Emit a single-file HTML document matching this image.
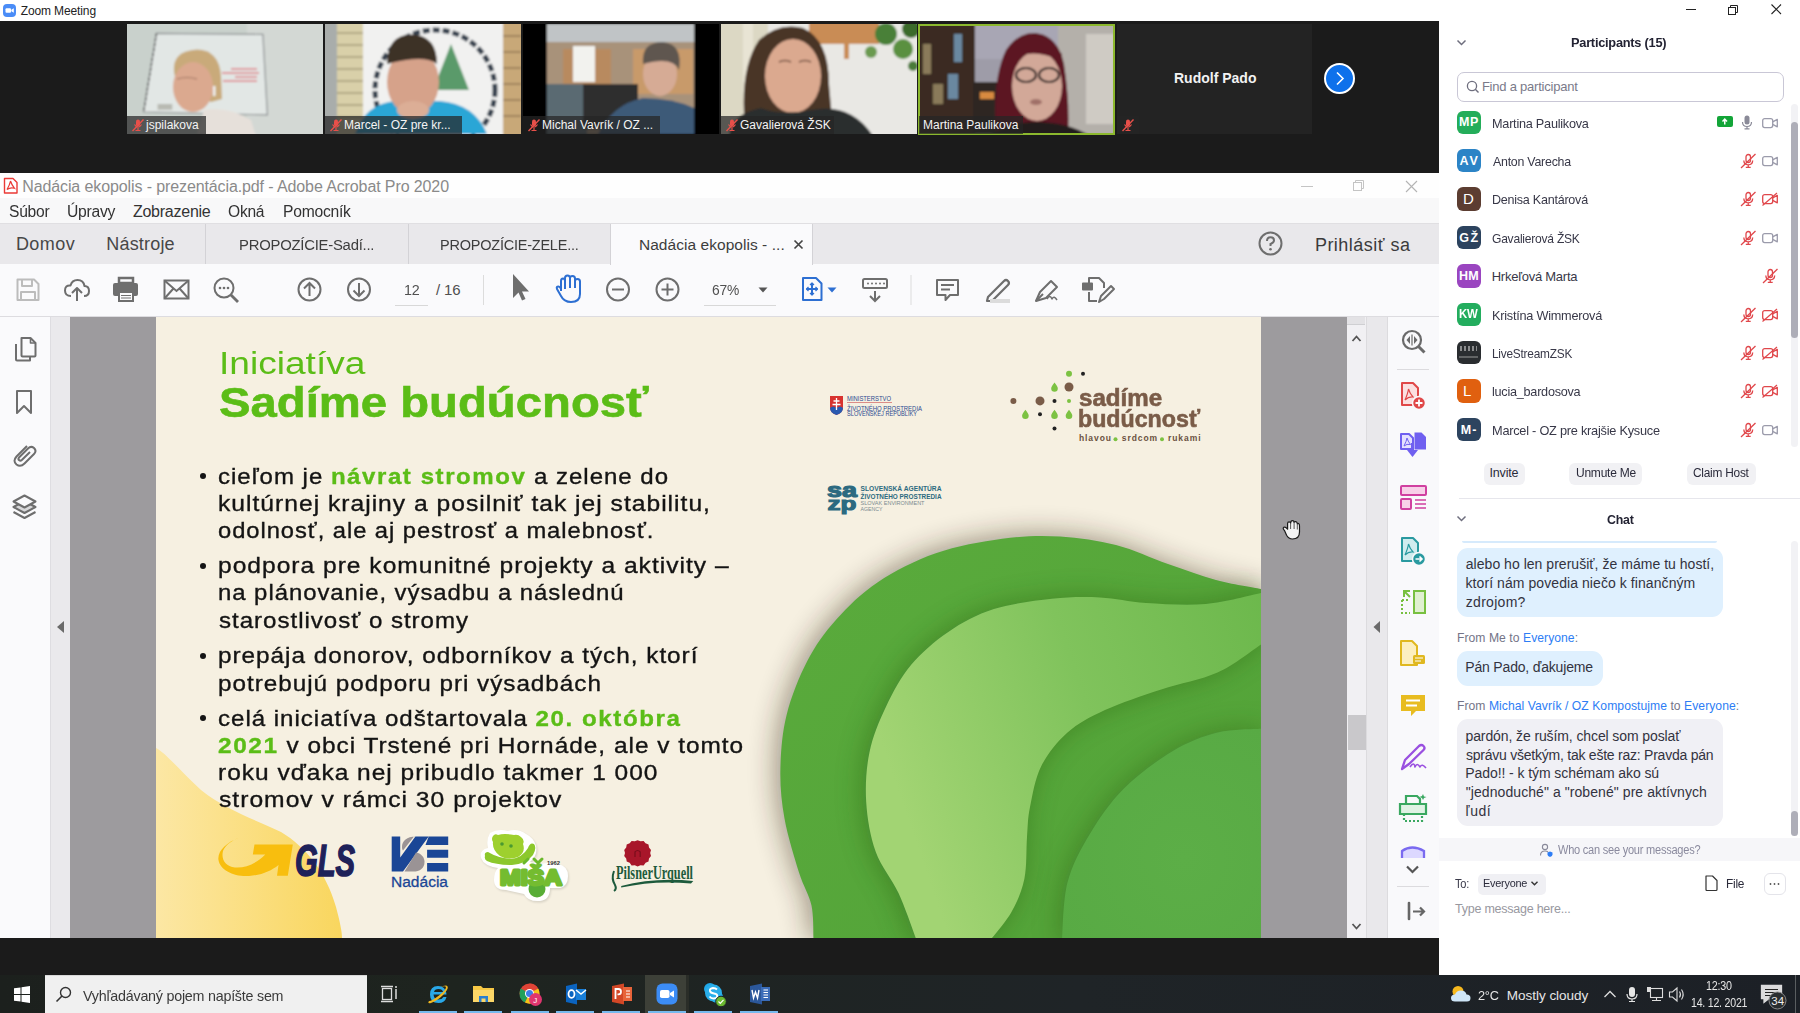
<!DOCTYPE html>
<html><head><meta charset="utf-8">
<style>
*{margin:0;padding:0;box-sizing:border-box}
html,body{width:1800px;height:1013px;overflow:hidden;background:#fff;font-family:"Liberation Sans",sans-serif}
.a{position:absolute}
.t{position:absolute;white-space:nowrap;line-height:1}
svg{overflow:visible}
</style></head><body>

<div class="a" style="left:0;top:0;width:1800px;height:21px;background:#fff"></div>
<svg class="a" style="left:3px;top:4px" width="14" height="14"><rect x="0" y="0" width="13" height="13" rx="4" fill="#4a8cf7"/><rect x="2.5" y="4.2" width="5.5" height="4.6" rx="1" fill="#fff"/><path d="M8.3 5.8 L10.8 4.3 V8.7 L8.3 7.2Z" fill="#fff"/></svg>
<div class="t" style="left:20.7px;top:4.6px;font-size:12px;color:#222;letter-spacing:-0.118px">Zoom Meeting</div>

<div class="a" style="left:0;top:21px;width:1439px;height:152px;background:#1b1b1b"></div>
<svg class="a" style="left:127px;top:24px;" width="196" height="110" viewBox="0 0 196 110"><defs><filter id="bl127" x="-10%" y="-10%" width="120%" height="120%"><feGaussianBlur stdDeviation="1.3"/></filter><clipPath id="cp127"><rect width="196" height="110"/></clipPath></defs><g clip-path="url(#cp127)"><g filter="url(#bl127)"><rect x="-5" y="-5" width="210" height="120" fill="#c9d1cc"/><rect x="120" y="-5" width="90" height="120" fill="#d3d8d4"/>
<path d="M29.5 9.3 L135.9 10.4 L140.4 90.9 L16.6 88 Z" fill="#e2e7e5" stroke="#8a8e90" stroke-width="1.2"/>
<path d="M29.5 9.3 L16.6 88" stroke="#555" stroke-width="1.5" stroke-dasharray="3 2"/>
<rect x="30.6" y="80" width="14.7" height="5.8" fill="#b8bab2"/>
<g stroke="#e07a80" stroke-width="1.3"><path d="M104 45 H130 M95 49 H132 M108 53 H130 M96 57 H130"/></g>
<path d="M47 48 Q45 27 70 25.6 Q92 26 94 52 L95 75 L84 78 L50 62Z" fill="#c9aa7a"/>
<ellipse cx="66" cy="63" rx="20" ry="25" fill="#dba98f"/>
<path d="M50 55 Q60 52 70 55" stroke="#9a7060" stroke-width="1.2" fill="none"/>
<path d="M70 110 L77 86 Q100 82 124 96 L130 115Z" fill="#e6e0da"/>
<rect x="86" y="62" width="2.5" height="10" fill="#f0f0f0"/></g></g></svg>
<svg class="a" style="left:325px;top:24px;" width="196" height="110" viewBox="0 0 196 110"><defs><filter id="bl325" x="-10%" y="-10%" width="120%" height="120%"><feGaussianBlur stdDeviation="1.3"/></filter><clipPath id="cp325"><rect width="196" height="110"/></clipPath></defs><g clip-path="url(#cp325)"><g filter="url(#bl325)"><rect x="-5" y="-5" width="210" height="120" fill="#f1f1f0"/>
<rect x="-5" y="-5" width="18" height="120" fill="#a9adab"/>
<rect x="12" y="-5" width="26" height="120" fill="#d9d0a9"/>
<g stroke="#8a7e62" stroke-width="1.2"><path d="M12 9 H38 M12 21 H38 M12 33 H38 M12 45 H38 M12 57 H38 M12 69 H38 M12 81 H38 M12 93 H38"/></g>
<rect x="178" y="-5" width="25" height="120" fill="#c8a878"/>
<g stroke="#7a6040" stroke-width="1"><path d="M178 12 H196 M178 28 H196 M178 44 H196 M178 60 H196 M178 76 H196 M178 92 H196"/></g>
<circle cx="110" cy="66" r="60" fill="none" stroke="#34404e" stroke-width="5" stroke-dasharray="7 3"/>
<path d="M126 20 L144 66 H108 Z" fill="#5a9a6a"/>
<path d="M30 110 Q40 80 70 77 H115 Q150 80 162 110Z" fill="#2aa6d6"/>
<ellipse cx="88" cy="58" rx="26" ry="33" fill="#d6a28a"/>
<path d="M62 40 Q62 10 88 10.4 Q112 12 112 40 Q100 30 62 40Z" fill="#3d3028"/>
<ellipse cx="88" cy="86" rx="16" ry="9" fill="#dcae96"/></g></g></svg>
<svg class="a" style="left:523px;top:24px;" width="196" height="110" viewBox="0 0 196 110"><defs><filter id="bl523" x="-10%" y="-10%" width="120%" height="120%"><feGaussianBlur stdDeviation="1.3"/></filter><clipPath id="cp523"><rect width="196" height="110"/></clipPath></defs><g clip-path="url(#cp523)"><g filter="url(#bl523)"><rect x="-5" y="-5" width="210" height="120" fill="#000"/>
<rect x="24" y="0" width="147" height="110" fill="#a8927a"/>
<rect x="24" y="0" width="147" height="18" fill="#c0c4c6"/>
<rect x="40" y="25" width="48" height="40" fill="#b88a5e"/>
<rect x="50" y="22" width="22" height="36" fill="#f2f2ee"/>
<rect x="110" y="25" width="60" height="45" fill="#c89a6a"/>
<rect x="24" y="60" width="40" height="50" fill="#5a6a72"/>
<rect x="60" y="60" width="55" height="45" fill="#2e2e2e"/>
<path d="M75 110 Q90 80 120 74 Q150 74 171 84 V110Z" fill="#3d5a78"/>
<ellipse cx="137" cy="50" rx="17" ry="22" fill="#d6ab95"/>
<path d="M120 40 Q118 18 140 18 Q160 20 156 46 Q150 32 120 40Z" fill="#5e5650"/></g></g></svg>
<svg class="a" style="left:721px;top:24px;" width="196" height="110" viewBox="0 0 196 110"><defs><filter id="bl721" x="-10%" y="-10%" width="120%" height="120%"><feGaussianBlur stdDeviation="1.3"/></filter><clipPath id="cp721"><rect width="196" height="110"/></clipPath></defs><g clip-path="url(#cp721)"><g filter="url(#bl721)"><rect x="-5" y="-5" width="210" height="120" fill="#e9e8e4"/>
<rect x="-5" y="-5" width="52" height="120" fill="#dcd8c4"/>
<rect x="22" y="-5" width="10" height="120" fill="#e8e4d4"/>
<rect x="88" y="-5" width="70" height="25" fill="#c98c55"/>
<rect x="123" y="15" width="5" height="20" fill="#c98c55"/>
<circle cx="165" cy="10" r="11" fill="#4a8038"/><circle cx="182" cy="25" r="10" fill="#5a9040"/><circle cx="190" cy="5" r="9" fill="#3a6a2a"/><circle cx="150" cy="28" r="6" fill="#6a9a50"/><circle cx="192" cy="42" r="5" fill="#4a7a38"/>
<path d="M24 105 Q18 45 38 16 Q58 -2 82 4 Q108 16 108 60 L112 105Z" fill="#4a3426"/>
<ellipse cx="72" cy="52" rx="28" ry="37" fill="#dba98f"/>
<path d="M58 38 Q64 35 70 38 M78 38 Q84 35 90 38" stroke="#6a4a3a" stroke-width="1.4" fill="none"/>
<path d="M8 112 Q10 90 40 84 Q60 92 90 86 Q130 78 152 112Z" fill="#2a2e2e"/></g></g></svg>
<svg class="a" style="left:918px;top:24px;" width="197" height="110" viewBox="0 0 197 110"><defs><filter id="bl918" x="-10%" y="-10%" width="120%" height="120%"><feGaussianBlur stdDeviation="1.3"/></filter><clipPath id="cp918"><rect width="197" height="110"/></clipPath></defs><g clip-path="url(#cp918)"><g filter="url(#bl918)"><rect x="-5" y="-5" width="210" height="120" fill="#9e9ca8"/>
<rect x="50" y="-5" width="110" height="40" fill="#a8a6b4"/>
<rect x="-5" y="-5" width="62" height="120" fill="#3a2a22"/>
<g fill="#6a88a0"><rect x="36" y="10" width="8" height="28"/><rect x="30" y="50" width="10" height="25"/></g><g fill="#8a7a5a"><rect x="5" y="20" width="8" height="30"/><rect x="15" y="60" width="10" height="20"/></g>
<rect x="55" y="58" width="30" height="52" fill="#2e2624"/>
<rect x="62" y="68" width="14" height="7" fill="#d88a40"/>
<rect x="82" y="53" width="10" height="12" fill="#3a4a88"/>
<rect x="140" y="-5" width="65" height="120" fill="#b4b0aa"/>
<rect x="168" y="10" width="28" height="90" fill="#cfcbc4"/>
<path d="M78 110 Q74 55 88 26 Q100 8 118 9 Q140 12 146 40 Q152 80 150 110Z" fill="#5c1424"/>
<ellipse cx="119" cy="62" rx="25" ry="35" fill="#d2a898"/>
<path d="M94 38 Q110 22 142 36 L144 30 Q124 12 96 30Z" fill="#5c1424"/>
<ellipse cx="108" cy="51" rx="10" ry="7" fill="none" stroke="#2a2220" stroke-width="2.2"/><ellipse cx="131" cy="51" rx="10" ry="7" fill="none" stroke="#2a2220" stroke-width="2.2"/>
<ellipse cx="118" cy="78" rx="6" ry="3" fill="#a07068"/>
<path d="M72 112 Q90 98 118 98 Q150 98 172 112Z" fill="#241c1c"/></g></g></svg>
<div class="a" style="left:918px;top:24px;width:197px;height:111px;border:2px solid #8cb82e"></div>
<div class="a" style="left:1117px;top:24px;width:195px;height:110px;background:#232323"></div><div class="t" style="left:1174px;top:71px;font-size:14px;font-weight:bold;color:#f2f2f2">Rudolf Pado</div>
<div class="a" style="left:1324px;top:63px;width:31px;height:31px;border-radius:50%;background:#0e71eb;border:2px solid #fff"></div>
<svg class="a" style="left:1324px;top:63px" width="31" height="31"><path d="M13 9.5 L19 15.5 L13 21.5" fill="none" stroke="#fff" stroke-width="1.6"/></svg>
<div class="a" style="left:127px;top:116px;width:79px;height:18px;background:rgba(38,38,38,.72)"></div>
<svg class="a" style="left:131px;top:118px" width="14" height="14"><rect x="5" y="1.5" width="4" height="7" rx="2" fill="#e8504a"/><path d="M3.5 6.5 Q7 12 10.5 6.5 M7 10 V12.5 M4.5 12.5 H9.5" stroke="#e8504a" stroke-width="1.2" fill="none"/><path d="M1.5 13 L12.5 1.5" stroke="#e8504a" stroke-width="1.4"/></svg>
<div class="t" style="left:146px;top:119px;font-size:12px;color:#f4f4f4">jspilakova</div>
<div class="a" style="left:325px;top:116px;width:137px;height:18px;background:rgba(38,38,38,.72)"></div>
<svg class="a" style="left:329px;top:118px" width="14" height="14"><rect x="5" y="1.5" width="4" height="7" rx="2" fill="#e8504a"/><path d="M3.5 6.5 Q7 12 10.5 6.5 M7 10 V12.5 M4.5 12.5 H9.5" stroke="#e8504a" stroke-width="1.2" fill="none"/><path d="M1.5 13 L12.5 1.5" stroke="#e8504a" stroke-width="1.4"/></svg>
<div class="t" style="left:344px;top:119px;font-size:12px;color:#f4f4f4">Marcel - OZ pre kr...</div>
<div class="a" style="left:523px;top:116px;width:137px;height:18px;background:rgba(38,38,38,.72)"></div>
<svg class="a" style="left:527px;top:118px" width="14" height="14"><rect x="5" y="1.5" width="4" height="7" rx="2" fill="#e8504a"/><path d="M3.5 6.5 Q7 12 10.5 6.5 M7 10 V12.5 M4.5 12.5 H9.5" stroke="#e8504a" stroke-width="1.2" fill="none"/><path d="M1.5 13 L12.5 1.5" stroke="#e8504a" stroke-width="1.4"/></svg>
<div class="t" style="left:542px;top:119px;font-size:12px;color:#f4f4f4">Michal Vavrík / OZ ...</div>
<div class="a" style="left:721px;top:116px;width:113px;height:18px;background:rgba(38,38,38,.72)"></div>
<svg class="a" style="left:725px;top:118px" width="14" height="14"><rect x="5" y="1.5" width="4" height="7" rx="2" fill="#e8504a"/><path d="M3.5 6.5 Q7 12 10.5 6.5 M7 10 V12.5 M4.5 12.5 H9.5" stroke="#e8504a" stroke-width="1.2" fill="none"/><path d="M1.5 13 L12.5 1.5" stroke="#e8504a" stroke-width="1.4"/></svg>
<div class="t" style="left:740px;top:119px;font-size:12px;color:#f4f4f4">Gavalierová ŽSK</div>
<div class="a" style="left:919px;top:116px;width:104px;height:18px;background:rgba(38,38,38,.72)"></div>
<div class="t" style="left:923px;top:119px;font-size:12px;color:#f4f4f4">Martina Paulikova</div>
<div class="a" style="left:1117px;top:116px;width:22px;height:18px;background:rgba(38,38,38,.72)"></div>
<svg class="a" style="left:1121px;top:118px" width="14" height="14"><rect x="5" y="1.5" width="4" height="7" rx="2" fill="#e8504a"/><path d="M3.5 6.5 Q7 12 10.5 6.5 M7 10 V12.5 M4.5 12.5 H9.5" stroke="#e8504a" stroke-width="1.2" fill="none"/><path d="M1.5 13 L12.5 1.5" stroke="#e8504a" stroke-width="1.4"/></svg>

<div class="a" style="left:0;top:173px;width:1439px;height:25px;background:#fefefe"></div>
<div class="a" style="left:0;top:198px;width:1439px;height:25px;background:#f8f8f9"></div>
<div class="a" style="left:0;top:223px;width:1439px;height:41px;background:#e9e8eb;border-top:1px solid #e0dfe2"></div>
<div class="a" style="left:0;top:264px;width:1439px;height:52px;background:#fafafc"></div>
<div class="a" style="left:0;top:316px;width:1439px;height:1px;background:#dddce0"></div>
<svg class="a" style="left:3px;top:177px" width="16" height="18"><path d="M1.5 1.5 H10 L14 5.5 V16 H1.5 Z" fill="#fff" stroke="#ea3a36" stroke-width="1.4" stroke-linejoin="round"/><path d="M4 12.5 Q7 7 7.5 4 Q8.3 7 11.5 11.3 Q7.5 10 4 12.5Z" fill="none" stroke="#ea3a36" stroke-width="1.2"/></svg>
<div class="t" style="left:22.2px;top:179.4px;font-size:16px;color:#8a8a8a;letter-spacing:-0.109px">Nadácia ekopolis - prezentácia.pdf - Adobe Acrobat Pro 2020</div>

<svg class="a" style="left:1290px;top:175px" width="140" height="22"><path d="M11 11.5 H23" stroke="#c4c4c4" stroke-width="1"/><rect x="63.5" y="7.5" width="8" height="8" fill="none" stroke="#c4c4c4"/><path d="M65.5 7.5 V5.5 H73.5 V13.5 H71.5" fill="none" stroke="#c4c4c4"/><path d="M116 6 L127 17 M127 6 L116 17" stroke="#b4b4b4" stroke-width="1.1"/></svg>
<div class="t" style="left:8.8px;top:204.2px;font-size:16px;color:#333;letter-spacing:-0.250px;transform:scaleX(0.9755);transform-origin:0 0">Súbor</div>

<div class="t" style="left:66.5px;top:204.2px;font-size:16px;color:#333;letter-spacing:-0.250px;transform:scaleX(0.9803);transform-origin:0 0">Úpravy</div>

<div class="t" style="left:132.9px;top:204.2px;font-size:16px;color:#333;letter-spacing:-0.244px">Zobrazenie</div>

<div class="t" style="left:228.0px;top:204.2px;font-size:16px;color:#333;letter-spacing:-0.250px;transform:scaleX(0.9741);transform-origin:0 0">Okná</div>

<div class="t" style="left:282.7px;top:204.2px;font-size:16px;color:#333;letter-spacing:-0.250px;transform:scaleX(0.9787);transform-origin:0 0">Pomocník</div>

<div class="t" style="left:15.9px;top:234.9px;font-size:18px;color:#474747;letter-spacing:0.450px">Domov</div>

<div class="t" style="left:106.3px;top:234.9px;font-size:18px;color:#474747;letter-spacing:0.186px">Nástroje</div>

<div class="a" style="left:205px;top:224px;width:1px;height:40px;background:#d3d2d6"></div>
<div class="a" style="left:408px;top:224px;width:1px;height:40px;background:#d3d2d6"></div>
<div class="t" style="left:239.0px;top:237.0px;font-size:15.5px;color:#3d3d3d;letter-spacing:-0.250px;transform:scaleX(0.9585);transform-origin:0 0">PROPOZÍCIE-Sadí...</div>

<div class="t" style="left:440.2px;top:237.0px;font-size:15.5px;color:#3d3d3d;letter-spacing:-0.250px;transform:scaleX(0.9364);transform-origin:0 0">PROPOZÍCIE-ZELE...</div>

<div class="a" style="left:610px;top:224px;width:203px;height:41px;background:#fafafc;border-left:1px solid #d3d2d6;border-right:1px solid #d3d2d6"></div>
<div class="t" style="left:638.9px;top:237.0px;font-size:15.5px;color:#3d3d3d;letter-spacing:0.052px">Nadácia ekopolis - ...</div>

<svg class="a" style="left:793px;top:239px" width="11" height="11"><path d="M1.5 1.5 L9.5 9.5 M9.5 1.5 L1.5 9.5" stroke="#444" stroke-width="1.7"/></svg>
<svg class="a" style="left:1257px;top:230px" width="27" height="27"><circle cx="13.5" cy="13.5" r="11" stroke="#6e6e6e" stroke-width="2" fill="none"/><path d="M10 11 Q10 7.3 13.5 7.3 Q17 7.3 17 10.5 Q17 12.5 13.5 14 V16" stroke="#6e6e6e" stroke-width="2" fill="none"/><circle cx="13.5" cy="19.3" r="1.3" fill="#6e6e6e"/></svg>
<div class="t" style="left:1314.9px;top:235.5px;font-size:18px;color:#3b3b3b;letter-spacing:0.482px">Prihlásiť sa</div>

<svg class="a" style="left:0;top:264px" width="1120" height="52">
 <g stroke="#bcbcbc" stroke-width="2" fill="none" stroke-linejoin="round"><path d="M17.5 15.5 H34 L38.5 20 V36 H17.5 Z"/><path d="M22 15.5 V22 H32 V15.5"/><path d="M21 36 V28 H35 V36"/></g>
 <g stroke="#6e6e6e" stroke-width="2" fill="none" stroke-linejoin="round"><path d="M71 32 Q65 32 65 26.5 Q65 21 70.5 21.5 Q72 16 77.5 16 Q83.5 16 84.5 22 Q89 22 89 27 Q89 32 84 32"/><path d="M77 37 V24 M72 29 L77 24 L82 29"/></g>
 <path d="M119 14 H133 V19 H119Z" fill="none" stroke="#6e6e6e" stroke-width="2.5"/><rect x="113" y="19" width="25" height="13" rx="2" fill="#6e6e6e"/><rect x="119" y="28" width="14" height="9" fill="#fafafc" stroke="#6e6e6e" stroke-width="2"/><path d="M121 31.5 H131 M121 34 H131" stroke="#6e6e6e" stroke-width="1"/>
 <g stroke="#6e6e6e" stroke-width="2" fill="none"><rect x="164.5" y="16.5" width="24" height="18"/><path d="M164.5 16.5 L176.5 27 L188.5 16.5 M164.5 34.5 L173 25 M188.5 34.5 L180 25"/></g>
 <g stroke="#6e6e6e" stroke-width="2" fill="none"><circle cx="224" cy="24" r="9.5"/><path d="M231 31 L238 38" stroke-width="2.8"/></g><g fill="#6e6e6e"><circle cx="220" cy="24" r="1.3"/><circle cx="224" cy="24" r="1.3"/><circle cx="228" cy="24" r="1.3"/></g>
 <g stroke="#6e6e6e" stroke-width="2" fill="none"><circle cx="309.5" cy="25.5" r="11"/><path d="M309.5 32 V19 M304 24.5 L309.5 19 L315 24.5"/></g>
 <g stroke="#6e6e6e" stroke-width="2" fill="none"><circle cx="359" cy="25.5" r="11"/><path d="M359 19 V32 M353.5 26.5 L359 32 L364.5 26.5"/></g>
 <path d="M395 41.5 H428" stroke="#d8d8d8" stroke-width="1"/>
 <path d="M483.5 11 V41" stroke="#dcdcdc" stroke-width="1"/>
 <path d="M513 10 L513 34 L518.5 28.5 L522 36.5 L525.5 35 L522 27.5 L529 27.5 Z" fill="#6e6e6e"/>
 <g stroke="#2d6fd2" stroke-width="2" fill="none" stroke-linejoin="round"><path d="M561 27 V17 Q561 14.5 563 14.5 Q565 14.5 565 17 V25 M565 24 V14 Q565 11.5 567.5 11.5 Q570 11.5 570 14 V24 M570 23 V14 Q570 12 572.5 12 Q575 12 575 14.5 V24 M575 23 V17 Q575 15 577.5 15 Q580 15 580 17.5 V30 Q580 38 571 38 Q564 38 561 32 L557 25 Q556 22.5 558.5 22.5 Q560 22.5 561 25"/></g>
 <g stroke="#6e6e6e" stroke-width="2" fill="none"><circle cx="618" cy="25.5" r="11"/><path d="M612 25.5 H624"/></g>
 <g stroke="#6e6e6e" stroke-width="2" fill="none"><circle cx="667.5" cy="25.5" r="11"/><path d="M661.5 25.5 H673.5 M667.5 19.5 V31.5"/></g>
 <path d="M704 41.5 H776" stroke="#d8d8d8" stroke-width="1"/>
 <path d="M758.5 23.5 H767.5 L763 28.5Z" fill="#555"/>
 <g stroke="#2d6fd2" stroke-width="2" fill="none" stroke-linejoin="round"><path d="M803 14 H816 L821.5 19.5 V36 H803Z"/><path d="M812 19 V31 M806.5 25 H817.5"/><path d="M810 21 L812 19 L814 21 M810 29 L812 31 L814 29 M808.5 23 L806.5 25 L808.5 27 M815.5 23 L817.5 25 L815.5 27" stroke-width="1.2"/></g>
 <path d="M827.5 23.5 H836.5 L832 28.5Z" fill="#2d6fd2"/>
 <g stroke="#6e6e6e" stroke-width="2" fill="none"><rect x="863" y="15" width="24" height="9" rx="1.5"/><path d="M875 27 V37 M870 32 L875 37 L880 32"/></g><g fill="#6e6e6e"><circle cx="868" cy="19.5" r="1"/><circle cx="872" cy="19.5" r="1"/><circle cx="876" cy="19.5" r="1"/><circle cx="880" cy="19.5" r="1"/><circle cx="884" cy="19.5" r="1"/></g>
 <path d="M911 11 V41" stroke="#dcdcdc" stroke-width="1"/>
 <g stroke="#6e6e6e" stroke-width="2" fill="none" stroke-linejoin="round"><path d="M937 16 H958 V31 H950 L945.5 36 V31 H937Z"/><path d="M941 21 H954 M941 25.5 H950"/></g>
 <g fill="none" stroke="#6e6e6e" stroke-width="2.2" stroke-linejoin="round"><path d="M988 33 L1004 17 Q1006 15 1008 17 Q1010 19 1008 21 L992 37 L987 37Z"/></g><rect x="990" y="35" width="20" height="4" fill="#dcdcdc"/>
 <g stroke="#6e6e6e" stroke-width="2" fill="none" stroke-linejoin="round"><path d="M1036 37 L1040 28 L1051 17 L1057 23 L1046 34 Z"/><path d="M1036 37 L1043 30"/><path d="M1047 35 Q1050 30 1052 35 Q1054 31 1057 36" stroke-width="1.5"/></g>
 <g stroke="#6e6e6e" stroke-width="2" fill="none" stroke-linejoin="round"><path d="M1089 20 V14 H1099 L1104 19 V24"/><path d="M1089 28 V37 H1097"/><rect x="1083" y="19.5" width="9" height="6" fill="#6e6e6e"/><path d="M1099 38 L1101 32 L1111 22 L1114 25 L1104 35 Z"/></g>
</svg>
<div class="t" style="left:403.7px;top:282.3px;font-size:15px;color:#505050;letter-spacing:-0.250px;transform:scaleX(0.9553);transform-origin:0 0">12</div>

<div class="t" style="left:436.0px;top:282.3px;font-size:15px;color:#505050;letter-spacing:-0.133px">/ 16</div>

<div class="t" style="left:712.3px;top:282.3px;font-size:15px;color:#505050;letter-spacing:-0.250px;transform:scaleX(0.9220);transform-origin:0 0">67%</div>

<div class="a" style="left:0;top:317px;width:50px;height:621px;background:#fafafc"></div>
<div class="a" style="left:50px;top:317px;width:20px;height:621px;background:#eae9ec;border-left:1px solid #dedde1"></div>
<div class="a" style="left:70px;top:317px;width:86px;height:621px;background:#9d9b9e"></div>
<div class="a" style="left:1261px;top:317px;width:86px;height:621px;background:#9d9b9e"></div>
<div class="a" style="left:1347px;top:317px;width:19px;height:621px;background:#f1f0f3"></div>
<div class="a" style="left:1347px;top:317px;width:18px;height:8px;background:#e3e2e5;border-bottom:1px solid #cfcfd2"></div>
<div class="a" style="left:1348px;top:715px;width:18px;height:35px;background:#c9c8cb"></div>
<div class="a" style="left:1366px;top:317px;width:21px;height:621px;background:#e9e8eb;border-left:1px solid #dcdbde"></div>
<div class="a" style="left:1387px;top:317px;width:52px;height:621px;background:#f9f9fb;border-left:1px solid #dcdbde"></div>
<svg class="a" style="left:0;top:317px" width="80" height="621">
 <g stroke="#6e6e6e" stroke-width="2" fill="none" stroke-linejoin="round"><path d="M16 27 V42.5 Q16 43.5 17 43.5 H30 V39.5"/><path d="M21.5 21 H30.5 L35.5 26 V38.5 Q35.5 39.5 34.5 39.5 H22.5 Q21.5 39.5 21.5 38.5 Z"/><path d="M30.5 21 V26 H35.5" stroke-width="1.6"/></g>
 <path d="M17 74 H31 V96 L24 89 L17 96 Z" stroke="#6e6e6e" stroke-width="2" fill="none" stroke-linejoin="round"/>
 <path d="M27 129 L16.5 139.5 Q12.5 144 16.5 147.5 Q20.5 150.5 24.5 146.5 L34 137 Q37 134 34 131 Q31 128.5 28 131.5 L19 140.5 Q17.8 142 19.2 143.2 Q20.5 144.2 21.8 143 L30 135" stroke="#6e6e6e" stroke-width="2" fill="none" stroke-linejoin="round"/>
 <g stroke="#6e6e6e" stroke-width="2" fill="none" stroke-linejoin="round"><path d="M13.5 195 L24.5 201 L35.5 195"/><path d="M13.5 190 L24.5 196 L35.5 190 L24.5 184Z" fill="#d8d8da"/><path d="M13.5 184.5 L24.5 178.5 L35.5 184.5 L24.5 190.5 Z" fill="#fafafc"/></g>
 <path d="M64 304 L57 310 L64 316 Z" fill="#6a6a6a"/>
</svg>
<svg class="a" style="left:1340px;top:317px" width="99" height="621">
 <path d="M12.5 24 L16.5 19.5 L20.5 24" stroke="#555" stroke-width="1.8" fill="none"/>
 <path d="M12.5 607 L16.5 611.5 L20.5 607" stroke="#555" stroke-width="1.8" fill="none"/>
 <path d="M33.5 310 L40 304 L40 316 Z" fill="#6a6a6a"/>
 <g stroke="#6a6a6a" stroke-width="2.2" fill="none"><circle cx="72" cy="23" r="9"/><path d="M78.5 29.5 L84.5 35.5" stroke-width="3"/></g><path d="M70 19 L66.5 23 L70 27Z M74 19 L77.5 23 L74 27Z" fill="#6a6a6a"/><path d="M72 17.5 V28.5" stroke="#6a6a6a" stroke-width="1.2"/>
 <path d="M57 52.5 H89" stroke="#dcdbde" stroke-width="1"/>
 <g stroke="#e04848" stroke-width="2" fill="#fbe0e0" stroke-linejoin="round"><path d="M62 66 H73 L78 71 V88 H62 Z"/></g><path d="M65 83 Q68 76 68.5 72 Q69.5 76 73 80 Q68.5 79.5 65 83" stroke="#e04848" stroke-width="1.2" fill="none"/><circle cx="79" cy="86" r="6.5" fill="#e04848" stroke="#f9f9fb" stroke-width="1.5"/><path d="M75.5 86 H82.5 M79 82.5 V89.5" stroke="#fff" stroke-width="1.8"/>
 <path d="M61 117 H69 L73 121 V132 H61Z" fill="#e4e0ff" stroke="#6f5ff0" stroke-width="2" stroke-linejoin="round"/><path d="M64 129 Q66.5 124 67 121 Q67.8 124 70.5 127.5 Q66.8 126.5 64 129" stroke="#6f5ff0" stroke-width="1" fill="none"/>
 <path d="M74.5 115.5 H81.5 L86 120 V132.5 H74.5Z" fill="#7060f0"/>
 <path d="M72.5 126 V134" stroke="#7060f0" stroke-width="3"/><path d="M67 133 H78 L72.5 140Z" fill="#7060f0"/>
 <g stroke="#d040a0" stroke-width="2" fill="#f8d0e8"><rect x="61" y="169" width="25" height="9" rx="1"/><rect x="61" y="182" width="10" height="10" rx="1"/></g><path d="M75 183 H86 M75 187 H86 M75 191 H86" stroke="#d040a0" stroke-width="1.5"/>
 <g stroke="#2a9aa0" stroke-width="2" fill="#d0ecee" stroke-linejoin="round"><path d="M62 221 H73 L78 226 V244 H62 Z"/></g><path d="M65 238 Q68 231 68.5 227 Q69.5 231 73 235 Q68.5 234.5 65 238" stroke="#2a9aa0" stroke-width="1.2" fill="none"/><circle cx="79" cy="242" r="6.5" fill="#2a9aa0" stroke="#f9f9fb" stroke-width="1.5"/><path d="M75.5 242 H82 M79.5 239.5 L82 242 L79.5 244.5" stroke="#fff" stroke-width="1.6" fill="none"/>
 <g stroke="#78c040" stroke-width="2" fill="none"><rect x="74" y="274" width="11" height="22" fill="#e0f0d0"/><path d="M62 283 V296 H70 M62 283 H70" stroke-dasharray="2 2"/><path d="M64 274 L70 280 M64 280 V274 H70" /></g>
 <g stroke="#e0b820" stroke-width="2" fill="#fcefc0" stroke-linejoin="round"><path d="M61 324 H72 L77 329 V348 H61 Z"/></g><rect x="73" y="338" width="12" height="9" rx="1.5" fill="#e0b820"/><path d="M75 341 H83 M75 344 H81" stroke="#fff" stroke-width="1"/>
 <path d="M61 378 H85 V394 H76 L71 399 V394 H61 Z" fill="#e8bc20"/><path d="M66 383.5 H80 M66 388.5 H77" stroke="#fff" stroke-width="1.8"/>
 <g stroke="#9a50e0" stroke-width="2.3" fill="none" stroke-linejoin="round"><path d="M62 452 L65 443 L79 429 Q81.5 427 83.5 429 Q85.5 431 83.5 433 L69 447 Z"/><path d="M70 450 Q74 444 75 450 Q77 445 80 450 Q82 446 86 451" stroke-width="1.6"/></g>
 <g stroke="#3aa860" stroke-width="2.2" fill="none"><path d="M60 487 H86 V497 H60 Z" fill="#e0f2e4"/><path d="M66 487 V479 H77 L80 482 V487"/><path d="M64 497 V504 H82 V497" stroke-dasharray="2 2"/></g><path d="M83 477 L84 479.5 L86.5 480 L84 481 L83 483 L82 481 L79.5 480 L82 479Z" fill="#3aa860"/>
 <path d="M62 541 V534 Q72 527 84 534 V541" stroke="#7a6af0" stroke-width="2.3" fill="#dcd8ff"/>
 <rect x="58" y="541" width="30" height="4" fill="#f9f9fb"/>
 <path d="M67 549.5 L72.5 555 L78 549.5" stroke="#555" stroke-width="2.2" fill="none"/>
 <path d="M57 569.5 H89" stroke="#dcdbde" stroke-width="1"/>
 <path d="M69 586 V602" stroke="#666" stroke-width="2.6" stroke-linecap="round"/><path d="M73 594.5 H84 M80 590.5 L84 594.5 L80 598.5" stroke="#666" stroke-width="2.2" fill="none"/>
</svg>
<div class="a" style="left:156px;top:317px;width:1105px;height:621px;background:#f6f0e1;overflow:hidden">
<svg class="a" style="left:0;top:0" width="1105" height="621">
<defs>
 <filter id="sh" x="-20%" y="-20%" width="140%" height="140%"><feGaussianBlur stdDeviation="14"/></filter>
 <linearGradient id="yl" x1="0" y1="0" x2="1" y2="0"><stop offset="0" stop-color="#fce7a4"/><stop offset="1" stop-color="#f9d65e"/></linearGradient>
 <linearGradient id="g1" x1="0" y1="0" x2="1" y2="1"><stop offset="0" stop-color="#5aab3c"/><stop offset="1" stop-color="#52a238"/></linearGradient>
 <linearGradient id="g2" x1="0" y1="0.3" x2="1" y2="0"><stop offset="0" stop-color="#a2d473"/><stop offset="0.5" stop-color="#80c35c"/><stop offset="1" stop-color="#6cb84c"/></linearGradient>
 <linearGradient id="g3" x1="0" y1="0" x2="1" y2="1"><stop offset="0" stop-color="#5aa840"/><stop offset="1" stop-color="#5ca642"/></linearGradient>
 <radialGradient id="g4" cx="0.6" cy="0.6" r="0.7"><stop offset="0" stop-color="#5cae47"/><stop offset="1" stop-color="#58aa44"/></radialGradient>
</defs>
<path d="M0 431 C10 436 25 455 45 473 C70 493 100 503 125 515 C150 530 170 555 180 590 C184 605 186 615 186 621 L0 621 Z" fill="url(#yl)"/>
<path d="M657.5 625.0 C657.2 618.9 657.9 600.2 655.5 588.6 C653.1 577.0 647.5 569.9 643.0 555.4 C638.5 540.9 631.6 518.8 628.5 501.5 C625.4 484.2 624.0 469.1 624.4 451.8 C624.8 434.5 626.1 415.9 630.6 397.9 C635.1 379.9 643.0 359.9 651.3 344.0 C659.6 328.1 668.5 315.6 680.3 302.5 C692.0 289.4 705.2 276.2 721.8 265.2 C738.4 254.1 759.1 243.4 779.8 236.2 C800.5 228.9 825.5 224.5 846.2 221.7 C866.9 218.9 885.2 218.4 904.2 219.5 C923.2 220.6 942.0 223.4 960.0 228.0 C978.0 232.6 995.3 241.2 1012.0 247.0 C1028.7 252.8 1044.5 258.8 1060.0 263.0 C1075.5 267.2 1097.5 270.5 1105.0 272.0  L1110 272 L1110 630 Z" fill="#2a1a08" opacity="0.45" filter="url(#sh)" transform="translate(-4,-2)"/>
<path d="M657.5 625.0 C657.2 618.9 657.9 600.2 655.5 588.6 C653.1 577.0 647.5 569.9 643.0 555.4 C638.5 540.9 631.6 518.8 628.5 501.5 C625.4 484.2 624.0 469.1 624.4 451.8 C624.8 434.5 626.1 415.9 630.6 397.9 C635.1 379.9 643.0 359.9 651.3 344.0 C659.6 328.1 668.5 315.6 680.3 302.5 C692.0 289.4 705.2 276.2 721.8 265.2 C738.4 254.1 759.1 243.4 779.8 236.2 C800.5 228.9 825.5 224.5 846.2 221.7 C866.9 218.9 885.2 218.4 904.2 219.5 C923.2 220.6 942.0 223.4 960.0 228.0 C978.0 232.6 995.3 241.2 1012.0 247.0 C1028.7 252.8 1044.5 258.8 1060.0 263.0 C1075.5 267.2 1097.5 270.5 1105.0 272.0  L1110 272 L1110 630 Z" fill="url(#g1)"/>
<path d="M761.2 625.0 C758.1 616.9 749.4 591.1 742.5 576.1 C735.6 561.1 725.1 549.9 719.7 534.7 C714.3 519.5 711.2 501.5 710.2 484.9 C709.2 468.3 710.2 451.1 713.5 435.2 C716.8 419.3 723.2 404.1 730.1 389.6 C737.0 375.1 744.6 360.6 755.0 348.1 C765.4 335.7 778.5 324.2 792.3 314.9 C806.1 305.6 820.6 297.6 837.9 292.1 C855.2 286.6 878.2 283.7 895.9 281.8 C913.6 279.9 928.3 279.8 944.0 280.5 C959.7 281.2 972.3 284.9 990.0 286.0 C1007.7 287.1 1030.8 288.7 1050.0 287.0 C1069.2 285.3 1095.8 277.8 1105.0 276.0  L1110 276 L1110 327.4 L1105 327.4 C1097.8 332.1 1078.1 348.0 1061.5 355.5 C1044.9 363.0 1024.0 366.1 1005.2 372.4 C986.5 378.6 964.6 385.8 949.0 393.0 C933.4 400.2 922.1 406.1 911.5 415.5 C900.9 424.9 891.5 436.8 885.2 449.2 C879.0 461.6 876.4 478.2 874.0 490.0 C871.6 501.8 871.9 508.1 871.0 520.0 C870.1 532.0 871.0 549.1 868.4 561.7 C865.8 574.3 861.2 585.0 855.2 595.5 C849.2 606.0 836.5 620.1 832.7 625.0  Z" fill="#20500f" opacity="0.4" filter="url(#sh)" transform="translate(-3,0)"/>
<path d="M761.2 625.0 C758.1 616.9 749.4 591.1 742.5 576.1 C735.6 561.1 725.1 549.9 719.7 534.7 C714.3 519.5 711.2 501.5 710.2 484.9 C709.2 468.3 710.2 451.1 713.5 435.2 C716.8 419.3 723.2 404.1 730.1 389.6 C737.0 375.1 744.6 360.6 755.0 348.1 C765.4 335.7 778.5 324.2 792.3 314.9 C806.1 305.6 820.6 297.6 837.9 292.1 C855.2 286.6 878.2 283.7 895.9 281.8 C913.6 279.9 928.3 279.8 944.0 280.5 C959.7 281.2 972.3 284.9 990.0 286.0 C1007.7 287.1 1030.8 288.7 1050.0 287.0 C1069.2 285.3 1095.8 277.8 1105.0 276.0  L1110 276 L1110 327.4 L1105 327.4 C1097.8 332.1 1078.1 348.0 1061.5 355.5 C1044.9 363.0 1024.0 366.1 1005.2 372.4 C986.5 378.6 964.6 385.8 949.0 393.0 C933.4 400.2 922.1 406.1 911.5 415.5 C900.9 424.9 891.5 436.8 885.2 449.2 C879.0 461.6 876.4 478.2 874.0 490.0 C871.6 501.8 871.9 508.1 871.0 520.0 C870.1 532.0 871.0 549.1 868.4 561.7 C865.8 574.3 861.2 585.0 855.2 595.5 C849.2 606.0 836.5 620.1 832.7 625.0  Z" fill="url(#g2)"/>
<path d="M905.9 625.0 C906.8 615.1 906.8 583.5 911.5 565.5 C916.2 547.5 924.6 532.3 934.0 516.7 C943.4 501.1 954.0 485.4 967.7 471.7 C981.5 457.9 1000.9 443.6 1016.5 434.2 C1032.1 424.8 1046.8 419.2 1061.5 415.5 C1076.2 411.8 1097.8 412.3 1105.0 411.7  L1110 410 L1110 630 Z" fill="#204a10" opacity="0.35" filter="url(#sh)" transform="translate(-3,0)"/>
<path d="M905.9 625.0 C906.8 615.1 906.8 583.5 911.5 565.5 C916.2 547.5 924.6 532.3 934.0 516.7 C943.4 501.1 954.0 485.4 967.7 471.7 C981.5 457.9 1000.9 443.6 1016.5 434.2 C1032.1 424.8 1046.8 419.2 1061.5 415.5 C1076.2 411.8 1097.8 412.3 1105.0 411.7  L1110 410 L1110 630 Z" fill="url(#g4)"/></svg>
</div>
<div class="t" style="left:218.7px;top:347.9px;font-size:31px;color:#5bbd17;transform:scaleX(1.1967);transform-origin:0 0">Iniciatíva</div>

<div class="t" style="left:219.1px;top:381.5px;font-size:42px;color:#5bbd17;transform:scaleX(1.1253);transform-origin:0 0;font-weight:bold;-webkit-text-stroke:0.6px #5bbd17">Sadíme budúcnosť</div>

<div class="t" style="left:218.3px;top:465.6px;font-size:22.2px;color:#111;letter-spacing:0.9px;transform:scaleX(1.0826);transform-origin:0 0;-webkit-text-stroke:0.35px currentColor"><span style="color:#141414">cieľom je </span><span style="color:#5bbd17;font-weight:bold;letter-spacing:1.4500000000000002px">návrat stromov</span><span style="color:#141414"> a zelene do</span></div>

<div class="t" style="left:217.6px;top:492.7px;font-size:22.2px;color:#111;letter-spacing:0.9px;transform:scaleX(1.1102);transform-origin:0 0;-webkit-text-stroke:0.35px currentColor"><span style="color:#141414">kultúrnej krajiny a posilniť tak jej stabilitu,</span></div>

<div class="t" style="left:218.3px;top:520.3px;font-size:22.2px;color:#111;letter-spacing:0.9px;transform:scaleX(1.0689);transform-origin:0 0;-webkit-text-stroke:0.35px currentColor"><span style="color:#141414">odolnosť, ale aj pestrosť a malebnosť.</span></div>

<div class="t" style="left:217.7px;top:554.7px;font-size:22.2px;color:#111;letter-spacing:0.9px;transform:scaleX(1.1079);transform-origin:0 0;-webkit-text-stroke:0.35px currentColor"><span style="color:#141414">podpora pre komunitné projekty a aktivity –</span></div>

<div class="t" style="left:217.7px;top:582.1px;font-size:22.2px;color:#111;letter-spacing:0.9px;transform:scaleX(1.0768);transform-origin:0 0;-webkit-text-stroke:0.35px currentColor"><span style="color:#141414">na plánovanie, výsadbu a následnú</span></div>

<div class="t" style="left:218.6px;top:609.9px;font-size:22.2px;color:#111;letter-spacing:0.9px;transform:scaleX(1.0857);transform-origin:0 0;-webkit-text-stroke:0.35px currentColor"><span style="color:#141414">starostlivosť o stromy</span></div>

<div class="t" style="left:217.8px;top:645.1px;font-size:22.2px;color:#111;letter-spacing:0.9px;transform:scaleX(1.0955);transform-origin:0 0;-webkit-text-stroke:0.35px currentColor"><span style="color:#141414">prepája donorov, odborníkov a tých, ktorí</span></div>

<div class="t" style="left:217.8px;top:672.5px;font-size:22.2px;color:#111;letter-spacing:0.9px;transform:scaleX(1.0935);transform-origin:0 0;-webkit-text-stroke:0.35px currentColor"><span style="color:#141414">potrebujú podporu pri výsadbách</span></div>

<div class="t" style="left:218.3px;top:707.8px;font-size:22.2px;color:#111;letter-spacing:0.9px;transform:scaleX(1.0858);transform-origin:0 0;-webkit-text-stroke:0.35px currentColor"><span style="color:#141414">celá iniciatíva odštartovala </span><span style="color:#5bbd17;font-weight:bold;letter-spacing:1.4500000000000002px">20. októbra</span></div>

<div class="t" style="left:218.4px;top:734.9px;font-size:22.2px;color:#111;letter-spacing:0.9px;transform:scaleX(1.0998);transform-origin:0 0;-webkit-text-stroke:0.35px currentColor"><span style="color:#5bbd17;font-weight:bold;letter-spacing:1.4500000000000002px">2021</span><span style="color:#141414"> v obci Trstené pri Hornáde, ale v tomto</span></div>

<div class="t" style="left:217.6px;top:762.3px;font-size:22.2px;color:#111;letter-spacing:0.9px;transform:scaleX(1.1045);transform-origin:0 0;-webkit-text-stroke:0.35px currentColor"><span style="color:#141414">roku vďaka nej pribudlo takmer 1 000</span></div>

<div class="t" style="left:218.6px;top:789.4px;font-size:22.2px;color:#111;letter-spacing:0.9px;transform:scaleX(1.1115);transform-origin:0 0;-webkit-text-stroke:0.35px currentColor"><span style="color:#141414">stromov v rámci 30 projektov</span></div>

<div class="a" style="left:199.5px;top:473.0px;width:6px;height:6px;border-radius:50%;background:#141414"></div>
<div class="a" style="left:199.5px;top:562.5px;width:6px;height:6px;border-radius:50%;background:#141414"></div>
<div class="a" style="left:199.5px;top:652.5px;width:6px;height:6px;border-radius:50%;background:#141414"></div>
<div class="a" style="left:199.5px;top:715.0px;width:6px;height:6px;border-radius:50%;background:#141414"></div>
<svg class="a" style="left:212px;top:830px" width="150" height="55">
 <path d="M26.7 7.9 C15 12 5 21 6.5 30 C8 40 22 47 37 46 C50 45 59 41 66.5 35 L65 45.8 L75.8 45.8 L80.8 14.6 L42.5 14.6 L40.8 24.6 L53.3 24.6 C45 33 33 38.5 23 37.5 C13 36 9 29 11 21 C13 15 20 10.5 26.7 7.9 Z" fill="#f8be0e"/>
 <text x="83" y="45.8" font-family="Liberation Sans" font-weight="bold" font-style="italic" font-size="44" fill="#1e2159" stroke="#1e2159" stroke-width="1.6" textLength="60" lengthAdjust="spacingAndGlyphs">GLS</text>
</svg>
<svg class="a" style="left:380px;top:828px" width="80" height="64">
 <path d="M11.7 8.5 H20.2 V29.4 L35.4 8.5 H48.7 L23 43.6 H11.7 Z" fill="#1a4696"/>
 <path d="M35.4 8.5 C27 8.5 22 13 22 19 C22 21 22.5 22 23 22.5 L34 8.5Z" fill="#9a9395"/>
 <path d="M36 24.5 C42 25.5 44.5 30 44.5 34 C44.5 40 40 43.6 33 43.6 H24.5 Z" fill="#9a9395"/>
 <path d="M48.7 8.5 H68.2 V17 H45.5 Z M47.1 21.8 H68.2 V29.7 H47.1 Z M47.1 35.1 H68.2 V43.6 H47.1 Z" fill="#1a4696"/>
 <text x="11" y="58.9" font-family="Liberation Sans" font-size="15.5" fill="#1a4696" stroke="#1a4696" stroke-width="0.3" textLength="57" lengthAdjust="spacingAndGlyphs">Nadácia</text>
</svg>
<svg class="a" style="left:478px;top:828px" width="100" height="75">
 <defs><filter id="msh"><feGaussianBlur stdDeviation="1.2"/></filter></defs>
 <path d="M12 5 Q20 0 30 3 Q40 0 48 6 Q56 10 58 18 Q60 28 52 34 L62 36 Q72 34 80 36 Q90 38 90 48 Q90 58 82 60 L72 60 Q72 72 62 73 Q50 74 46 66 L28 62 Q16 62 16 52 Q16 44 20 40 Q6 38 3 30 Q1 22 10 20 Q8 12 12 5Z" fill="#000" opacity="0.12" filter="url(#msh)" transform="translate(1,1.5)"/>
 <path d="M12 5 Q20 0 30 3 Q40 0 48 6 Q56 10 58 18 Q60 28 52 34 L62 36 Q72 34 80 36 Q90 38 90 48 Q90 58 82 60 L72 60 Q72 72 62 73 Q50 74 46 66 L28 62 Q16 62 16 52 Q16 44 20 40 Q6 38 3 30 Q1 22 10 20 Q8 12 12 5Z" fill="#fff"/>
 <path d="M15 8 Q17 5 20 7 Q26 5 36 7 Q40 6 43 9 Q47 12 45 16 Q48 24 40 29 Q30 33 22 28 Q14 22 15 14 Q13 11 15 8Z" fill="#9ed02e"/>
 <path d="M7 28 Q6 24 10 24 Q20 30 33 31 Q44 30 50 20 Q52 14 56 16 Q59 20 55 27 Q48 36 34 37 Q18 37 9 33 Q6 31 7 28Z" fill="#8cc82c"/>
 <circle cx="24" cy="16" r="1.8" fill="#4a9a30"/><circle cx="33" cy="18" r="1.8" fill="#4a9a30"/>
 <ellipse cx="59" cy="61" rx="8.5" ry="8.5" fill="#58ad36"/>
 <text x="22" y="57" font-family="Liberation Sans" font-weight="bold" font-size="22" fill="#84c834" stroke="#74bc30" stroke-width="3" stroke-linejoin="round" textLength="62" lengthAdjust="spacingAndGlyphs">MIŠA</text>
 <path d="M46 35 L50 31 M56 31 L60 35 L64 31" stroke="#6ab82a" stroke-width="3" fill="none" stroke-linecap="round"/>
 <text x="69" y="36.6" font-family="Liberation Sans" font-weight="bold" font-size="5.5" fill="#333" textLength="13" lengthAdjust="spacingAndGlyphs">1962</text>
</svg>
<svg class="a" style="left:605px;top:835px" width="100" height="63">
 <path d="M32.6 5.3 L35.5 6.2 L38.6 6 L40.5 8.3 L43.5 9.5 L44 12.6 L46 15 L45.2 18 L46 21 L44 23.5 L43.5 26.6 L40.6 27.8 L38.6 30.4 L35.5 30.3 L32.6 31.5 L29.8 30.3 L26.6 30.4 L24.7 27.8 L21.7 26.6 L21.2 23.5 L19.2 21 L20 18 L19.2 15 L21.2 12.6 L21.7 9.5 L24.7 8.3 L26.6 6 L29.8 6.2 Z" fill="#a8162a"/>
 <path d="M30 22 V17 Q32.6 14 35.2 17 V22" stroke="#7a0e1c" stroke-width="1.2" fill="none"/>
 <text x="11" y="43.5" font-family="Liberation Serif" font-weight="bold" font-size="19" fill="#1d5a3c" textLength="77" lengthAdjust="spacingAndGlyphs">PilsnerUrquell</text>
 <path d="M9 36 Q6 44 10 50 Q12 54 9 56" stroke="#1d5a3c" stroke-width="2" fill="none"/>
 <path d="M16.2 51 Q50 42 88.3 46 L86 48.5 Q50 45 16.2 52.5 Z" fill="#1d5a3c"/>
</svg>
<svg class="a" style="left:820px;top:360px" width="400" height="160">
 <path d="M10 36 H23 V47 Q23 53 16.5 55 Q10 53 10 47Z" fill="#d8332f"/><path d="M10 48 Q13 45 16.5 48 Q20 45 23 48 Q23 53 16.5 55 Q10 53 10 48Z" fill="#2a5ab0"/><path d="M16.5 38 V50 M13.5 41 H19.5 M12.5 44.5 H20.5" stroke="#fff" stroke-width="1.3"/>
 <text x="27" y="41" font-family="Liberation Sans" font-size="6.5" fill="#2a4a90" textLength="44" lengthAdjust="spacingAndGlyphs">MINISTERSTVO</text>
 <path d="M27 42.5 H72" stroke="#d06060" stroke-width="0.7"/>
 <text x="27" y="50.5" font-family="Liberation Sans" font-size="6.5" fill="#2a4a90" textLength="75" lengthAdjust="spacingAndGlyphs">ŽIVOTNÉHO PROSTREDIA</text>
 <text x="27" y="56" font-family="Liberation Sans" font-size="6.5" fill="#2a4a90" textLength="70" lengthAdjust="spacingAndGlyphs">SLOVENSKEJ REPUBLIKY</text>
 <text x="7" y="137" font-family="Liberation Sans" font-weight="bold" font-size="21" fill="#2c6a80" stroke="#2c6a80" stroke-width="1.2" textLength="30" lengthAdjust="spacingAndGlyphs">sa</text>
 <text x="7.5" y="149.5" font-family="Liberation Sans" font-weight="bold" font-size="18" fill="#2c6a80" stroke="#2c6a80" stroke-width="1" textLength="29" lengthAdjust="spacingAndGlyphs">zp</text>
 <text x="40.5" y="131" font-family="Liberation Sans" font-weight="bold" font-size="8" fill="#2c6a80" textLength="81" lengthAdjust="spacingAndGlyphs">SLOVENSKÁ AGENTÚRA</text>
 <text x="40.5" y="138.5" font-family="Liberation Sans" font-weight="bold" font-size="8" fill="#2c6a80" textLength="81" lengthAdjust="spacingAndGlyphs">ŽIVOTNÉHO PROSTREDIA</text>
 <text x="40.5" y="145" font-family="Liberation Sans" font-size="6" fill="#7a8a90" textLength="64" lengthAdjust="spacingAndGlyphs">SLOVAK ENVIRONMENT</text>
 <text x="40.5" y="151" font-family="Liberation Sans" font-size="6" fill="#7a8a90" textLength="22" lengthAdjust="spacingAndGlyphs">AGENCY</text>
</svg>
<svg class="a" style="left:1000px;top:360px" width="210" height="90"><circle cx="69" cy="13.699999999999989" r="3.0" fill="#7cc242"/><circle cx="83" cy="13.699999999999989" r="2" fill="#222"/><path d="M54.5 22.5 Q58.0 27 57.8 28.5 A3.3 3.3 0 0 1 51.2 28.5 Q51.0 27 54.5 22.5Z" fill="#7cc242"/><circle cx="69" cy="27" r="4.5" fill="#7a5c48"/><circle cx="13.399999999999977" cy="40.89999999999998" r="3" fill="#7a5c48"/><circle cx="40" cy="40.89999999999998" r="4.5" fill="#7a5c48"/><circle cx="54.5" cy="40.89999999999998" r="2" fill="#222"/><circle cx="69" cy="40.89999999999998" r="2" fill="#7cc242"/><path d="M25.40000000000009 49.69999999999999 Q28.90000000000009 54.19999999999999 28.70000000000009 55.69999999999999 A3.3 3.3 0 0 1 22.10000000000009 55.69999999999999 Q21.90000000000009 54.19999999999999 25.40000000000009 49.69999999999999Z" fill="#7cc242"/><circle cx="40" cy="54.19999999999999" r="2" fill="#222"/><path d="M54.5 49.69999999999999 Q58.0 54.19999999999999 57.8 55.69999999999999 A3.3 3.3 0 0 1 51.2 55.69999999999999 Q51.0 54.19999999999999 54.5 49.69999999999999Z" fill="#7cc242"/><path d="M69 49.69999999999999 Q72.5 54.19999999999999 72.3 55.69999999999999 A3.3 3.3 0 0 1 65.7 55.69999999999999 Q65.5 54.19999999999999 69 49.69999999999999Z" fill="#7cc242"/><circle cx="54.5" cy="68.39999999999998" r="2" fill="#222"/></svg>
<div class="t" style="left:1078.7px;top:386.5px;font-size:23px;color:#7a5c48;transform:scaleX(1.0489);transform-origin:0 0;font-weight:bold;-webkit-text-stroke:0.6px #7a5c48">sadíme</div>

<div class="t" style="left:1078.0px;top:407.9px;font-size:23px;color:#7a5c48;transform:scaleX(1.0092);transform-origin:0 0;font-weight:bold;-webkit-text-stroke:0.6px #7a5c48">budúcnosť</div>

<div class="t" style="left:1078.9px;top:434.4px;font-size:8.5px;color:#6a5040;font-weight:bold;letter-spacing:0.935px;white-space:pre">hlavou   srdcom   rukami</div>

<svg class="a" style="left:1110px;top:435px" width="60" height="8"><circle cx="5.5" cy="4.3" r="2" fill="#7cc242"/><circle cx="52" cy="4.3" r="2" fill="#7cc242"/></svg>
<div class="a" style="left:0;top:938px;width:1439px;height:37px;background:#1b1b1b"></div>
<svg class="a" style="left:1275px;top:510px" width="35" height="35"><path d="M9.5 20.5 Q7.3 18.5 8.8 17.3 Q10.3 16.3 12.6 19.2 V13.6 Q12.6 11.8 14.1 11.8 Q15.5 11.8 15.6 13.2 Q15.8 10.6 17.4 10.6 Q19 10.6 19.1 12.4 Q19.5 11.4 20.9 11.6 Q22.2 11.9 22.3 13.8 Q23 13.2 23.8 13.7 Q24.6 14.2 24.5 16.2 V22 Q24.5 29 17.5 29 Q13.6 29 11.6 25.3 Z" fill="#f4f4f4" stroke="#1a1a1a" stroke-width="1.2" stroke-linejoin="round"/><path d="M15.6 13.2 V19 M19.1 12.4 V19 M22.3 13.8 V19.5" stroke="#444" stroke-width="0.9"/></svg>
<div class="a" style="left:1439px;top:21px;width:361px;height:954px;background:#fff"></div>
<svg class="a" style="left:1680px;top:0" width="120" height="21"><path d="M6 9.5 H16" stroke="#222" stroke-width="1"/><rect x="48.5" y="7.5" width="7" height="7" fill="none" stroke="#222"/><path d="M50.5 7.5 V5.5 H57.5 V12.5 H55.5" fill="none" stroke="#222"/><path d="M91.5 4.5 L101 14 M101 4.5 L91.5 14" stroke="#222" stroke-width="1.1"/></svg>
<svg class="a" style="left:1455px;top:38px" width="14" height="10"><path d="M2.5 2.5 L6.5 6.5 L10.5 2.5" stroke="#6e6e7e" stroke-width="1.5" fill="none"/></svg>
<div class="t" style="left:1571.1px;top:36.4px;font-size:13px;color:#232333;font-weight:bold;letter-spacing:-0.250px;transform:scaleX(0.9833);transform-origin:0 0">Participants (15)</div>

<div class="a" style="left:1457px;top:72px;width:327px;height:30px;border:1px solid #c9c7d6;border-radius:7px;background:#fff"></div>
<svg class="a" style="left:1466px;top:80px" width="14" height="14"><circle cx="6" cy="6" r="4.6" stroke="#6e6e7e" stroke-width="1.3" fill="none"/><path d="M9.3 9.3 L12.5 12.5" stroke="#6e6e7e" stroke-width="1.4"/></svg>
<div class="t" style="left:1481.9px;top:80.0px;font-size:13px;color:#7a7a8a;letter-spacing:-0.224px">Find a participant</div>

<div class="a" style="left:1791px;top:104px;width:7px;height:343px;border-radius:4px;background:#f2f2f5"></div>
<div class="a" style="left:1791px;top:122px;width:7px;height:216px;border-radius:4px;background:#aeaeb8"></div>
<div class="a" style="left:1457px;top:110.5px;width:23.5px;height:23.5px;border-radius:6px;background:#24ad5a"></div>
<div class="t" style="left:1459.0px;top:116.4px;font-size:12.5px;color:#fff;font-weight:bold;letter-spacing:0.500px">MP</div>

<div class="t" style="left:1491.7px;top:116.5px;font-size:13px;color:#383848;letter-spacing:-0.250px;transform:scaleX(0.9756);transform-origin:0 0">Martina Paulikova</div>

<div class="a" style="left:1717px;top:116.3px;width:15.5px;height:11px;border-radius:2px;background:#13a538"></div>
<svg class="a" style="left:1717px;top:116.3px" width="16" height="11"><path d="M7.75 8.5 V3.5 M5.5 5.5 L7.75 3 L10 5.5" stroke="#fff" stroke-width="1.5" fill="none"/></svg>
<svg class="a" style="left:1739px;top:114.5px" width="16" height="16"><rect x="5.5" y="0.5" width="5" height="9" rx="2.5" fill="#8a8a98"/><path d="M3.5 7 Q3.5 11.5 8 11.5 Q12.5 11.5 12.5 7 M8 11.5 V13.5 M5.5 13.8 H10.5" stroke="#8a8a98" stroke-width="1.2" fill="none"/></svg>
<svg class="a" style="left:1761px;top:115.5px" width="18" height="14"><rect x="1.7" y="2.6" width="10" height="9" rx="2" fill="none" stroke="#9b9bab" stroke-width="1.3"/><path d="M11.7 5.8 L16.3 3.4 V10.8 L11.7 8.4" fill="none" stroke="#9b9bab" stroke-width="1.3" stroke-linejoin="round"/></svg>
<div class="a" style="left:1457px;top:148.9px;width:23.5px;height:23.5px;border-radius:6px;background:#2c84c6"></div>
<div class="t" style="left:1459.5px;top:154.8px;font-size:12.5px;color:#fff;font-weight:bold;letter-spacing:2.000px">AV</div>

<div class="t" style="left:1492.8px;top:154.9px;font-size:13px;color:#383848;letter-spacing:-0.250px;transform:scaleX(0.9524);transform-origin:0 0">Anton Varecha</div>

<svg class="a" style="left:1740px;top:152.9px" width="16" height="16"><rect x="6" y="1.5" width="4.5" height="8" rx="2.25" fill="none" stroke="#e0474b" stroke-width="1.3"/><path d="M3.8 7.5 Q4 11.8 8.25 11.8 Q12.5 11.8 12.7 7.5 M8.25 11.8 V14 M5.8 14.3 H10.7" stroke="#e0474b" stroke-width="1.3" fill="none"/><path d="M1 15 L15.5 1" stroke="#e0474b" stroke-width="1.3"/></svg>
<svg class="a" style="left:1761px;top:153.9px" width="18" height="14"><rect x="1.7" y="2.6" width="10" height="9" rx="2" fill="none" stroke="#9b9bab" stroke-width="1.3"/><path d="M11.7 5.8 L16.3 3.4 V10.8 L11.7 8.4" fill="none" stroke="#9b9bab" stroke-width="1.3" stroke-linejoin="round"/></svg>
<div class="a" style="left:1457px;top:187.3px;width:23.5px;height:23.5px;border-radius:6px;background:#5c3d31"></div>
<div class="t" style="left:1463.0px;top:191.1px;font-size:15px;color:#fff">D</div>

<div class="t" style="left:1491.7px;top:193.3px;font-size:13px;color:#383848;letter-spacing:-0.250px;transform:scaleX(0.9650);transform-origin:0 0">Denisa Kantárová</div>

<svg class="a" style="left:1740px;top:191.3px" width="16" height="16"><rect x="6" y="1.5" width="4.5" height="8" rx="2.25" fill="none" stroke="#e0474b" stroke-width="1.3"/><path d="M3.8 7.5 Q4 11.8 8.25 11.8 Q12.5 11.8 12.7 7.5 M8.25 11.8 V14 M5.8 14.3 H10.7" stroke="#e0474b" stroke-width="1.3" fill="none"/><path d="M1 15 L15.5 1" stroke="#e0474b" stroke-width="1.3"/></svg>
<svg class="a" style="left:1761px;top:192.3px" width="18" height="14"><rect x="1.7" y="2.6" width="10" height="9" rx="2" fill="none" stroke="#e0474b" stroke-width="1.3"/><path d="M11.7 5.8 L16.3 3.4 V10.8 L11.7 8.4" fill="none" stroke="#e0474b" stroke-width="1.3" stroke-linejoin="round"/><path d="M1.5 13.5 L16 1" stroke="#e0474b" stroke-width="1.2"/></svg>
<div class="a" style="left:1457px;top:225.7px;width:23.5px;height:23.5px;border-radius:6px;background:#2c435e"></div>
<div class="t" style="left:1459.2px;top:231.6px;font-size:12.5px;color:#fff;font-weight:bold;letter-spacing:1.500px">GŽ</div>

<div class="t" style="left:1492.2px;top:231.7px;font-size:13px;color:#383848;letter-spacing:-0.250px;transform:scaleX(0.9277);transform-origin:0 0">Gavalierová ŽSK</div>

<svg class="a" style="left:1740px;top:229.7px" width="16" height="16"><rect x="6" y="1.5" width="4.5" height="8" rx="2.25" fill="none" stroke="#e0474b" stroke-width="1.3"/><path d="M3.8 7.5 Q4 11.8 8.25 11.8 Q12.5 11.8 12.7 7.5 M8.25 11.8 V14 M5.8 14.3 H10.7" stroke="#e0474b" stroke-width="1.3" fill="none"/><path d="M1 15 L15.5 1" stroke="#e0474b" stroke-width="1.3"/></svg>
<svg class="a" style="left:1761px;top:230.7px" width="18" height="14"><rect x="1.7" y="2.6" width="10" height="9" rx="2" fill="none" stroke="#9b9bab" stroke-width="1.3"/><path d="M11.7 5.8 L16.3 3.4 V10.8 L11.7 8.4" fill="none" stroke="#9b9bab" stroke-width="1.3" stroke-linejoin="round"/></svg>
<div class="a" style="left:1457px;top:264.1px;width:23.5px;height:23.5px;border-radius:6px;background:#9a45c0"></div>
<div class="t" style="left:1459.0px;top:270.0px;font-size:12.5px;color:#fff;font-weight:bold;letter-spacing:0.200px">HM</div>

<div class="t" style="left:1491.7px;top:270.1px;font-size:13px;color:#383848;letter-spacing:-0.250px">Hrkeľová Marta</div>

<svg class="a" style="left:1762px;top:268.1px" width="16" height="16"><rect x="6" y="1.5" width="4.5" height="8" rx="2.25" fill="none" stroke="#e0474b" stroke-width="1.3"/><path d="M3.8 7.5 Q4 11.8 8.25 11.8 Q12.5 11.8 12.7 7.5 M8.25 11.8 V14 M5.8 14.3 H10.7" stroke="#e0474b" stroke-width="1.3" fill="none"/><path d="M1 15 L15.5 1" stroke="#e0474b" stroke-width="1.3"/></svg>
<div class="a" style="left:1457px;top:302.5px;width:23.5px;height:23.5px;border-radius:6px;background:#23ad5e"></div>
<div class="t" style="left:1459.0px;top:308.4px;font-size:12.5px;color:#fff;font-weight:bold;letter-spacing:-0.250px;transform:scaleX(0.9114);transform-origin:0 0">KW</div>

<div class="t" style="left:1491.7px;top:308.5px;font-size:13px;color:#383848;letter-spacing:-0.250px;transform:scaleX(0.9772);transform-origin:0 0">Kristína Wimmerová</div>

<svg class="a" style="left:1740px;top:306.5px" width="16" height="16"><rect x="6" y="1.5" width="4.5" height="8" rx="2.25" fill="none" stroke="#e0474b" stroke-width="1.3"/><path d="M3.8 7.5 Q4 11.8 8.25 11.8 Q12.5 11.8 12.7 7.5 M8.25 11.8 V14 M5.8 14.3 H10.7" stroke="#e0474b" stroke-width="1.3" fill="none"/><path d="M1 15 L15.5 1" stroke="#e0474b" stroke-width="1.3"/></svg>
<svg class="a" style="left:1761px;top:307.5px" width="18" height="14"><rect x="1.7" y="2.6" width="10" height="9" rx="2" fill="none" stroke="#e0474b" stroke-width="1.3"/><path d="M11.7 5.8 L16.3 3.4 V10.8 L11.7 8.4" fill="none" stroke="#e0474b" stroke-width="1.3" stroke-linejoin="round"/><path d="M1.5 13.5 L16 1" stroke="#e0474b" stroke-width="1.2"/></svg>
<div class="a" style="left:1457px;top:340.9px;width:23.5px;height:23.5px;border-radius:6px;background:#2a2d30"></div>
<div class="a" style="left:1460px;top:345.9px;width:17px;height:5px;background:repeating-linear-gradient(90deg,#ccc 0 2px,transparent 2px 4px);opacity:.6"></div>
<div class="a" style="left:1459px;top:355.9px;width:19px;height:2px;background:#888;opacity:.6"></div>
<div class="t" style="left:1491.8px;top:346.9px;font-size:13px;color:#383848;letter-spacing:-0.250px;transform:scaleX(0.9124);transform-origin:0 0">LiveStreamZSK</div>

<svg class="a" style="left:1740px;top:344.9px" width="16" height="16"><rect x="6" y="1.5" width="4.5" height="8" rx="2.25" fill="none" stroke="#e0474b" stroke-width="1.3"/><path d="M3.8 7.5 Q4 11.8 8.25 11.8 Q12.5 11.8 12.7 7.5 M8.25 11.8 V14 M5.8 14.3 H10.7" stroke="#e0474b" stroke-width="1.3" fill="none"/><path d="M1 15 L15.5 1" stroke="#e0474b" stroke-width="1.3"/></svg>
<svg class="a" style="left:1761px;top:345.9px" width="18" height="14"><rect x="1.7" y="2.6" width="10" height="9" rx="2" fill="none" stroke="#e0474b" stroke-width="1.3"/><path d="M11.7 5.8 L16.3 3.4 V10.8 L11.7 8.4" fill="none" stroke="#e0474b" stroke-width="1.3" stroke-linejoin="round"/><path d="M1.5 13.5 L16 1" stroke="#e0474b" stroke-width="1.2"/></svg>
<div class="a" style="left:1457px;top:379.3px;width:23.5px;height:23.5px;border-radius:6px;background:#e0600f"></div>
<div class="t" style="left:1463.0px;top:383.1px;font-size:15px;color:#fff">L</div>

<div class="t" style="left:1491.9px;top:385.3px;font-size:13px;color:#383848;letter-spacing:-0.250px;transform:scaleX(0.9723);transform-origin:0 0">lucia_bardosova</div>

<svg class="a" style="left:1740px;top:383.3px" width="16" height="16"><rect x="6" y="1.5" width="4.5" height="8" rx="2.25" fill="none" stroke="#e0474b" stroke-width="1.3"/><path d="M3.8 7.5 Q4 11.8 8.25 11.8 Q12.5 11.8 12.7 7.5 M8.25 11.8 V14 M5.8 14.3 H10.7" stroke="#e0474b" stroke-width="1.3" fill="none"/><path d="M1 15 L15.5 1" stroke="#e0474b" stroke-width="1.3"/></svg>
<svg class="a" style="left:1761px;top:384.3px" width="18" height="14"><rect x="1.7" y="2.6" width="10" height="9" rx="2" fill="none" stroke="#e0474b" stroke-width="1.3"/><path d="M11.7 5.8 L16.3 3.4 V10.8 L11.7 8.4" fill="none" stroke="#e0474b" stroke-width="1.3" stroke-linejoin="round"/><path d="M1.5 13.5 L16 1" stroke="#e0474b" stroke-width="1.2"/></svg>
<div class="a" style="left:1457px;top:417.7px;width:23.5px;height:23.5px;border-radius:6px;background:#2d445f"></div>
<div class="t" style="left:1460.7px;top:423.6px;font-size:12.5px;color:#fff;font-weight:bold;letter-spacing:1.200px">M-</div>

<div class="t" style="left:1491.7px;top:423.7px;font-size:13px;color:#383848;letter-spacing:-0.250px;transform:scaleX(0.9814);transform-origin:0 0">Marcel - OZ pre krajšie Kysuce</div>

<svg class="a" style="left:1740px;top:421.7px" width="16" height="16"><rect x="6" y="1.5" width="4.5" height="8" rx="2.25" fill="none" stroke="#e0474b" stroke-width="1.3"/><path d="M3.8 7.5 Q4 11.8 8.25 11.8 Q12.5 11.8 12.7 7.5 M8.25 11.8 V14 M5.8 14.3 H10.7" stroke="#e0474b" stroke-width="1.3" fill="none"/><path d="M1 15 L15.5 1" stroke="#e0474b" stroke-width="1.3"/></svg>
<svg class="a" style="left:1761px;top:422.7px" width="18" height="14"><rect x="1.7" y="2.6" width="10" height="9" rx="2" fill="none" stroke="#9b9bab" stroke-width="1.3"/><path d="M11.7 5.8 L16.3 3.4 V10.8 L11.7 8.4" fill="none" stroke="#9b9bab" stroke-width="1.3" stroke-linejoin="round"/></svg>
<div class="a" style="left:1484px;top:463px;width:41px;height:22px;border-radius:6px;background:#f1f1f4"></div>
<div class="t" style="left:1489.6px;top:467.4px;font-size:12.5px;color:#2a2a3a;letter-spacing:-0.200px">Invite</div>

<div class="a" style="left:1569px;top:463px;width:73px;height:22px;border-radius:6px;background:#f1f1f4"></div>
<div class="t" style="left:1575.5px;top:467.4px;font-size:12.5px;color:#2a2a3a;letter-spacing:-0.250px;transform:scaleX(0.9607);transform-origin:0 0">Unmute Me</div>

<div class="a" style="left:1687px;top:463px;width:69px;height:22px;border-radius:6px;background:#f1f1f4"></div>
<div class="t" style="left:1692.7px;top:467.4px;font-size:12.5px;color:#2a2a3a;letter-spacing:-0.250px;transform:scaleX(0.9493);transform-origin:0 0">Claim Host</div>

<div class="a" style="left:1459px;top:498px;width:341px;height:1px;background:#e6e6ec"></div>
<svg class="a" style="left:1455px;top:514px" width="14" height="10"><path d="M2.5 2.5 L6.5 6.5 L10.5 2.5" stroke="#6e6e7e" stroke-width="1.5" fill="none"/></svg>
<div class="t" style="left:1606.5px;top:512.6px;font-size:13px;color:#232333;font-weight:bold;letter-spacing:-0.250px;transform:scaleX(0.9510);transform-origin:0 0">Chat</div>

<div class="a" style="left:1462px;top:540.5px;width:255px;height:2px;border-radius:0 0 4px 4px;background:#d6eafc"></div>
<div class="a" style="left:1457px;top:548px;width:266px;height:69px;border-radius:11px;background:#dff0fe"></div>
<div class="t" style="left:1465.8px;top:557.2px;font-size:14px;color:#333340;letter-spacing:0.028px">alebo ho len prerušiť, že máme tu hostí,</div>

<div class="t" style="left:1465.5px;top:576.1px;font-size:14px;color:#333340;letter-spacing:0.074px">ktorí nám povedia niečo k finančným</div>

<div class="t" style="left:1465.8px;top:594.9px;font-size:14px;color:#333340;letter-spacing:0.286px">zdrojom?</div>

<div class="t" style="left:1457px;top:631.6px;font-size:12.15px;color:#747487;letter-spacing:0.05px">From Me to <span style="color:#2d7df5">Everyone</span>:</div>
<div class="a" style="left:1457px;top:651px;width:146px;height:34.5px;border-radius:11px;background:#dff0fe"></div>
<div class="t" style="left:1465.3px;top:660.4px;font-size:14px;color:#333340;letter-spacing:-0.182px">Pán Pado, ďakujeme</div>

<div class="t" style="left:1457px;top:700.3px;font-size:12.15px;color:#747487;letter-spacing:0.05px">From <span style="color:#2d7df5">Michal Vavrík / OZ Kompostujme</span> to <span style="color:#2d7df5">Everyone</span>:</div>
<div class="a" style="left:1457px;top:718.5px;width:266px;height:107px;border-radius:11px;background:#f0f0f5"></div>
<div class="t" style="left:1465.5px;top:728.8px;font-size:14px;color:#333340;letter-spacing:-0.106px">pardón, že ruším, chcel som poslať</div>

<div class="t" style="left:1466.0px;top:747.6px;font-size:14px;color:#333340;letter-spacing:-0.236px">správu všetkým, tak ešte raz: Pravda pán</div>

<div class="t" style="left:1465.3px;top:766.3px;font-size:14px;color:#333340;letter-spacing:-0.079px">Pado!! - k tým schémam ako sú</div>

<div class="t" style="left:1465.8px;top:785.1px;font-size:14px;color:#333340;letter-spacing:0.069px">&quot;jednoduché&quot; a &quot;robené&quot; pre aktívnych</div>

<div class="t" style="left:1465.5px;top:803.8px;font-size:14px;color:#333340;letter-spacing:0.567px">ľudí</div>

<div class="a" style="left:1791px;top:541px;width:7px;height:295px;border-radius:4px;background:#f2f2f5"></div>
<div class="a" style="left:1791px;top:811px;width:7px;height:25px;border-radius:4px;background:#aeaeb8"></div>
<div class="a" style="left:1439px;top:838px;width:361px;height:23px;background:#f6f6f9"></div>
<svg class="a" style="left:1539px;top:843px" width="14" height="14"><circle cx="6" cy="4" r="2.6" stroke="#8a8a9a" stroke-width="1.1" fill="none"/><path d="M1.5 12.5 Q1.5 8 6 8 Q8 8 9 9" stroke="#8a8a9a" stroke-width="1.1" fill="none"/><path d="M8.5 9.5 L11 8.5 L13.5 9.5 V11.5 Q13.5 13 11 14 Q8.5 13 8.5 11.5Z" fill="#2d7df5"/></svg>
<div class="t" style="left:1557.9px;top:844.3px;font-size:12px;color:#8a8a9e;letter-spacing:-0.250px;transform:scaleX(0.9188);transform-origin:0 0">Who can see your messages?</div>

<div class="t" style="left:1455.1px;top:877.5px;font-size:12px;color:#3a3a4a;letter-spacing:-0.250px;transform:scaleX(0.9220);transform-origin:0 0">To:</div>

<div class="a" style="left:1478px;top:873.5px;width:68px;height:21px;border-radius:5px;background:#f0f0f4"></div>
<div class="t" style="left:1483.4px;top:878.0px;font-size:11.5px;color:#2a2a3a;letter-spacing:-0.250px;transform:scaleX(0.9461);transform-origin:0 0">Everyone</div>

<svg class="a" style="left:1530px;top:880px" width="10" height="8"><path d="M1.5 1.8 L4.5 4.8 L7.5 1.8" stroke="#333" stroke-width="1.4" fill="none"/></svg>
<svg class="a" style="left:1704px;top:875px" width="15" height="17"><path d="M2 1 H8.5 L13 5.5 V14.5 Q13 15.5 12 15.5 H3 Q2 15.5 2 14.5 Z" fill="none" stroke="#333" stroke-width="1.2" stroke-linejoin="round"/></svg>
<div class="t" style="left:1726.0px;top:877.5px;font-size:12px;color:#2a2a3a;letter-spacing:-0.250px;transform:scaleX(0.9913);transform-origin:0 0">File</div>

<div class="a" style="left:1763.5px;top:873px;width:22.5px;height:21.5px;border-radius:6px;border:1px solid #e4e4ea"></div>
<svg class="a" style="left:1763px;top:873px" width="23" height="22"><circle cx="7.5" cy="11" r="0.9" fill="#555"/><circle cx="11.5" cy="11" r="0.9" fill="#555"/><circle cx="15.5" cy="11" r="0.9" fill="#555"/></svg>
<div class="t" style="left:1455.1px;top:903.2px;font-size:12.5px;color:#98989f;letter-spacing:-0.247px">Type message here...</div>

<div class="a" style="left:0;top:975px;width:1800px;height:38px;background:linear-gradient(90deg,#1c201d 0%,#1e241f 25%,#1f2427 60%,#1c2026 100%)"></div>
<svg class="a" style="left:13px;top:986px" width="18" height="17"><path d="M1 2.3 L7.5 1.4 V8 H1Z M8.5 1.2 L17 0 V8 H8.5Z M1 9 H7.5 V15.6 L1 14.7Z M8.5 9 H17 V17 L8.5 15.8Z" fill="#fff"/></svg>
<div class="a" style="left:45px;top:975px;width:322px;height:38px;background:#f0f0f0;border-top:1px solid #d8d8d8"></div>
<svg class="a" style="left:55px;top:986px" width="18" height="18"><circle cx="10.5" cy="6.5" r="5" stroke="#333" stroke-width="1.4" fill="none"/><path d="M7 10 L1.5 15.5" stroke="#333" stroke-width="1.6"/></svg>
<div class="t" style="left:82.7px;top:987.8px;font-size:15px;color:#3a3a3a;letter-spacing:-0.250px;transform:scaleX(0.9536);transform-origin:0 0">Vyhľadávaný pojem napíšte sem</div>

<svg class="a" style="left:380px;top:984px" width="20" height="20"><rect x="2.5" y="4.5" width="9" height="11" stroke="#ddd" stroke-width="1.3" fill="none"/><path d="M1 2.5 H13 M1 17.5 H13" stroke="#ddd" stroke-width="1.3"/><path d="M16 5 V15" stroke="#ddd" stroke-width="1.5"/><circle cx="16" cy="3" r="1" fill="#ddd"/></svg>
<div class="a" style="left:645px;top:975px;width:41px;height:38px;background:#3d4038"></div>
<div class="a" style="left:686px;top:975px;width:3px;height:38px;background:#2a2d28"></div>

<svg class="a" style="left:426px;top:982px" width="24" height="24"><path d="M12 4 Q20 4 20.5 12.5 H7.5 Q8 17.5 12.5 17.5 Q16 17.5 17.5 15 H20.5 Q19 21 12.5 21 Q4 21 4 12.5 Q4 4 12 4Z M8 10 H17 Q16.5 7 12.5 7 Q8.5 7 8 10Z" fill="#29a8e8"/><path d="M3 19 Q1 22 5 21 Q14 18 21 8 Q23 4 20 3.5 Q17 3.5 14 5.5 Q19 3.5 20 5 Q20 8 13 13.5 Q5 19.5 3 19Z" fill="#f0b820"/></svg>
<svg class="a" style="left:472px;top:983px" width="24" height="22"><path d="M1 3 H9 L11 5 H22 V19 H1Z" fill="#f7c845"/><path d="M1 7 H22 V19 H1Z" fill="#fcd768"/><path d="M7 13 H16 V19 H13.5 V15.5 H9.5 V19 H7Z" fill="#2a7fd0"/></svg>
<svg class="a" style="left:518px;top:982px" width="26" height="26"><circle cx="11.5" cy="11.5" r="10" fill="#e04336"/><path d="M11.5 1.5 A10 10 0 0 1 20.2 6.5 L11.5 6.5Z" fill="#e04336"/><path d="M2.8 6.5 A10 10 0 0 0 7 20.5 L11.5 11.5Z" fill="#21a05a"/><path d="M20.2 6.5 A10 10 0 0 1 7 20.5 L11.5 11.5Z" fill="#f5c518"/><circle cx="11.5" cy="11.5" r="4.5" fill="#fff"/><circle cx="11.5" cy="11.5" r="3.5" fill="#3d7ee8"/><circle cx="17.5" cy="17.5" r="6.5" fill="#e0356f"/><text x="15.3" y="21" font-family="Liberation Sans" font-size="8" fill="#fff">J</text></svg>
<svg class="a" style="left:564px;top:982px" width="24" height="24"><path d="M2 4 L13 1.5 V22.5 L2 20Z" fill="#0b64c0"/><rect x="12" y="7" width="10" height="11" fill="#1a7fd8"/><path d="M12 8 L17 12 L22 8" stroke="#fff" stroke-width="1.5" fill="none"/><ellipse cx="7.5" cy="12" rx="3" ry="3.8" stroke="#fff" stroke-width="1.8" fill="none"/></svg>
<svg class="a" style="left:610px;top:982px" width="24" height="24"><path d="M2 4 L14 1.5 V22.5 L2 20Z" fill="#d24726"/><rect x="13" y="5" width="9" height="14" fill="#e8643a"/><path d="M16 9 H20 M16 12 H20 M16 15 H20" stroke="#fff" stroke-width="1.2"/><path d="M5.5 17 V7 H8.5 Q11 7 11 9.7 Q11 12.4 8.5 12.4 H7.5" stroke="#fff" stroke-width="1.8" fill="none"/></svg>
<svg class="a" style="left:656px;top:983px" width="23" height="22"><rect x="0.5" y="0.5" width="21" height="21" rx="6" fill="#3c8cf5"/><rect x="4" y="7" width="9.5" height="8" rx="1.8" fill="#fff"/><path d="M14 10 L18 7.5 V14.5 L14 12Z" fill="#fff"/></svg>
<svg class="a" style="left:702px;top:982px" width="26" height="26"><circle cx="8" cy="7" r="6" fill="#20a8e8"/><circle cx="15" cy="15" r="6" fill="#20a8e8"/><circle cx="11.5" cy="11" r="8.5" fill="#2aaeea"/><path d="M15 7.5 Q13.5 6 11 6 Q7.5 6.5 8 9 Q8.5 11 12 11.5 Q15.5 12 15.3 14.3 Q15 16.5 11.5 16.5 Q9 16.5 7.5 14.5" stroke="#fff" stroke-width="2" fill="none"/><circle cx="19" cy="19.5" r="5.3" fill="#6bb830" stroke="#1f2426" stroke-width="1"/><path d="M16.5 19.5 L18.3 21.3 L21.5 17.8" stroke="#fff" stroke-width="1.2" fill="none"/></svg>
<svg class="a" style="left:748px;top:982px" width="24" height="24"><path d="M2 4 L14 1.5 V22.5 L2 20Z" fill="#2b579a"/><rect x="13" y="5" width="9" height="14" fill="#3a6cb8"/><path d="M15.5 8 H20 M15.5 10.5 H20 M15.5 13 H20 M15.5 15.5 H20" stroke="#fff" stroke-width="1.1"/><path d="M4 8 L5.5 16 L7.5 10 L9.5 16 L11 8" stroke="#fff" stroke-width="1.4" fill="none"/></svg>

<div class="a" style="left:418.7px;top:1011px;width:38px;height:2px;background:#76b9ed"></div>
<div class="a" style="left:464.4px;top:1011px;width:38px;height:2px;background:#76b9ed"></div>
<div class="a" style="left:510.9px;top:1011px;width:38px;height:2px;background:#76b9ed"></div>
<div class="a" style="left:556.1px;top:1011px;width:38px;height:2px;background:#76b9ed"></div>
<div class="a" style="left:602.0px;top:1011px;width:38px;height:2px;background:#76b9ed"></div>
<div class="a" style="left:648.3px;top:1011px;width:38px;height:2px;background:#76b9ed"></div>
<div class="a" style="left:694.2px;top:1011px;width:38px;height:2px;background:#76b9ed"></div>
<div class="a" style="left:739.9px;top:1011px;width:38px;height:2px;background:#76b9ed"></div>
<svg class="a" style="left:1450px;top:984px" width="22" height="19"><circle cx="8" cy="7.5" r="5.5" fill="#f6b81e"/><path d="M5 17.5 Q1 17.5 1 14 Q1 10.5 5 10.5 Q6.5 6.5 11 6.5 Q15.5 6.5 16.5 10.5 Q20.5 10.5 20.5 14 Q20.5 17.5 17 17.5Z" fill="#cfe6f8"/></svg>
<div class="t" style="left:1478.3px;top:988.6px;font-size:13.5px;color:#e6e6e6;letter-spacing:-0.250px;transform:scaleX(0.9426);transform-origin:0 0">2°C</div>

<div class="t" style="left:1506.8px;top:988.6px;font-size:13.5px;color:#e6e6e6;letter-spacing:-0.025px">Mostly cloudy</div>

<svg class="a" style="left:1602px;top:988px" width="16" height="12"><path d="M2.5 9 L8 3.5 L13.5 9" stroke="#ddd" stroke-width="1.3" fill="none"/></svg>
<svg class="a" style="left:1625px;top:986px" width="14" height="17"><rect x="4" y="1" width="6" height="10" rx="3" fill="#e6e6e6"/><path d="M2 8 Q2 13 7 13 Q12 13 12 8 M7 13 V15.5 M4 15.5 H10" stroke="#e6e6e6" stroke-width="1.2" fill="none"/></svg>
<svg class="a" style="left:1646px;top:986px" width="18" height="17"><rect x="4.5" y="2.5" width="12" height="9" stroke="#ddd" stroke-width="1.1" fill="none"/><path d="M10.5 11.5 V14.5 M6 14.5 H15" stroke="#ddd" stroke-width="1.1"/><rect x="1" y="1" width="4" height="5" fill="#ddd"/></svg>
<svg class="a" style="left:1668px;top:986px" width="18" height="17"><path d="M1.5 6 H4.5 L9 2 V15 L4.5 11 H1.5Z" stroke="#ddd" stroke-width="1.1" fill="none"/><path d="M11.5 5.5 Q13.5 8.5 11.5 11.5 M13.5 3.5 Q16.8 8.5 13.5 13.5" stroke="#ddd" stroke-width="1.1" fill="none"/></svg>
<div class="t" style="left:1706.0px;top:979.8px;font-size:12px;color:#e6e6e6;letter-spacing:-0.250px;transform:scaleX(0.8953);transform-origin:0 0">12:30</div>

<div class="t" style="left:1691.2px;top:996.6px;font-size:12px;color:#e6e6e6;letter-spacing:-0.250px;transform:scaleX(0.8825);transform-origin:0 0">14. 12. 2021</div>

<svg class="a" style="left:1759px;top:983px" width="30" height="28"><path d="M2.5 2.5 H22.5 V15.5 H10 L5 19.5 V15.5 H2.5Z" stroke="#e6e6e6" stroke-width="1.3" fill="#e6e6e6" opacity="0.95"/><path d="M6 6.5 H19 M6 9.5 H19 M6 12.5 H15" stroke="#222" stroke-width="1"/><circle cx="18.5" cy="17.5" r="8.5" fill="#2a2e30" stroke="#888" stroke-width="1"/><text x="12.3" y="21.8" font-family="Liberation Sans" font-size="11.5" fill="#eee">34</text></svg>
<div class="a" style="left:1795px;top:975px;width:1px;height:38px;background:#5a5e60"></div>
</body></html>
